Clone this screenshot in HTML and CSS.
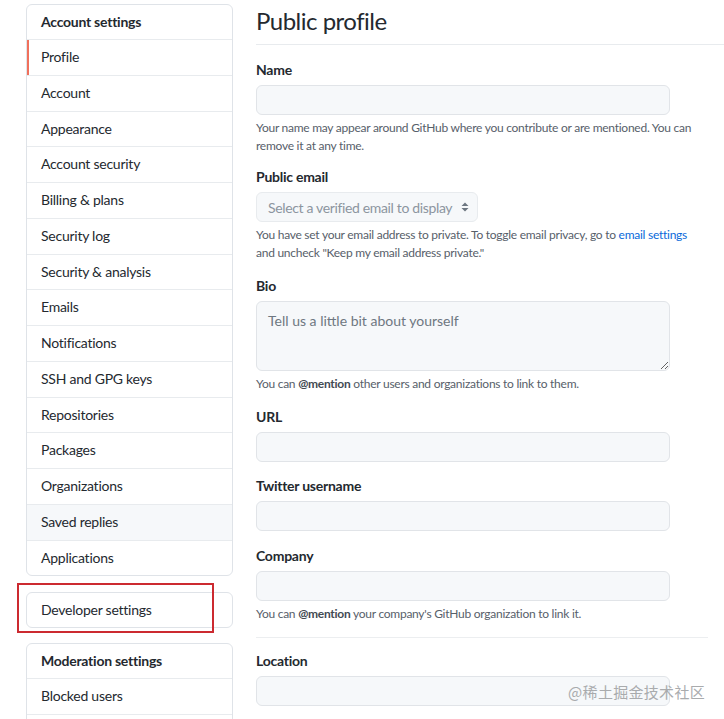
FILE: index.html
```html
<!DOCTYPE html>
<html lang="en">
<head>
<meta charset="utf-8">
<title>Public profile</title>
<link rel="stylesheet" href="styles.css">
</head>
<body>
<div class="page">
  <aside class="sidebar">
    <nav class="menu">
      <div class="menu-heading">Account settings</div>
      <a class="menu-item selected">Profile</a>
      <a class="menu-item">Account</a>
      <a class="menu-item">Appearance</a>
      <a class="menu-item">Account security</a>
      <a class="menu-item">Billing &amp; plans</a>
      <a class="menu-item">Security log</a>
      <a class="menu-item">Security &amp; analysis</a>
      <a class="menu-item">Emails</a>
      <a class="menu-item">Notifications</a>
      <a class="menu-item">SSH and GPG keys</a>
      <a class="menu-item">Repositories</a>
      <a class="menu-item">Packages</a>
      <a class="menu-item">Organizations</a>
      <a class="menu-item hover">Saved replies</a>
      <a class="menu-item">Applications</a>
    </nav>
    <nav class="menu menu-dev">
      <a class="menu-item first">Developer settings</a>
    </nav>
    <div class="highlight-box"></div>
    <nav class="menu menu-mod">
      <div class="menu-heading">Moderation settings</div>
      <a class="menu-item">Blocked users</a>
      <a class="menu-item"></a>
    </nav>
  </aside>
  <main class="main">
    <h1 class="title">Public profile</h1>
    <div class="field first-field">
      <label class="label">Name</label>
      <input class="input" type="text">
      <p class="note">Your name may appear around GitHub where you contribute or are mentioned. You can remove it at any time.</p>
    </div>
    <div class="field email-field">
      <label class="label">Public email</label>
      <div class="select">
        <span class="select-text">Select a verified email to display</span>
        <svg class="select-arrows" width="8" height="12" viewBox="0 0 8 12"><path d="M4 1.5 L7.5 5 H0.5 Z M4 10.5 L7.5 7 H0.5 Z" fill="#6e7781"/></svg>
      </div>
      <p class="note">You have set your email address to private. To toggle email privacy, go to <a class="link">email settings</a> and uncheck "Keep my email address private."</p>
    </div>
    <div class="field">
      <label class="label">Bio</label>
      <textarea class="textarea" placeholder="Tell us a little bit about yourself"></textarea>
      <p class="note">You can <strong>@mention</strong> other users and organizations to link to them.</p>
    </div>
    <div class="field">
      <label class="label">URL</label>
      <input class="input" type="text">
    </div>
    <div class="field">
      <label class="label">Twitter username</label>
      <input class="input" type="text">
    </div>
    <div class="field company-field">
      <label class="label">Company</label>
      <input class="input" type="text">
      <p class="note">You can <strong>@mention</strong> your company's GitHub organization to link it.</p>
    </div>
    <hr class="divider">
    <div class="field after-divider">
      <label class="label">Location</label>
      <input class="input" type="text">
    </div>
  </main>
</div>
<div class="watermark">@稀土掘金技术社区</div>
</body>
</html>
```
FILE: styles.css
```css
* { box-sizing: border-box; }
html, body {
  margin: 0;
  padding: 0;
  background: #ffffff;
  overflow: hidden;
}
body {
  font-family: Lato, "Open Sans", "Liberation Sans", sans-serif;
  color: #24292f;
  font-size: 14px;
  letter-spacing: -0.25px;
  height: 719px;
  position: relative;
}
.page {
  display: flex;
  gap: 23px;
  padding-left: 26px;
}
.sidebar {
  width: 207px;
  flex: none;
  position: relative;
  padding-top: 4px;
}
.menu {
  border: 1px solid #dfe3e8;
  border-radius: 6px;
  overflow: hidden;
  background: #fff;
}
.menu-heading {
  height: 34px;
  line-height: 34px;
  padding-left: 14px;
  font-weight: 700;
  font-size: 14px;
}
.menu-item {
  display: block;
  height: 35.75px;
  line-height: 34.75px;
  padding-left: 14px;
  border-top: 1px solid #e8ebee;
  color: #24292f;
  font-size: 14px;
  position: relative;
}
.menu-item.first { border-top: 0; height: 34px; line-height: 34px; }
.menu-item.selected::before {
  content: "";
  position: absolute;
  left: 0;
  top: 0;
  bottom: 0;
  width: 2px;
  background: #f0705c;
}
.menu-item.hover { background: #f6f8fa; }
.menu-dev { margin-top: 16px; }
.menu-mod { margin-top: 15px; }
.highlight-box {
  position: absolute;
  left: -9px;
  top: 583px;
  width: 197px;
  height: 50px;
  border: 2px solid #cc2a30;
}
.main {
  flex: 1;
  min-width: 0;
}
.title {
  margin: 6px 0 0 0;
  font-size: 24px;
  line-height: 30px;
  font-weight: 400;
  letter-spacing: -0.5px;
  padding-bottom: 8px;
  border-bottom: 1px solid #e8ebee;
}
.field { margin-top: 14px; }
.first-field { margin-top: 15px; }
.email-field { margin-top: 12px; }
.company-field { margin-top: 15px; }
.label {
  display: block;
  font-weight: 700;
  font-size: 14px;
  line-height: 20px;
  margin-bottom: 5px;
}
.input {
  display: block;
  width: 414px;
  height: 30px;
  margin: 0;
  border: 1px solid #e1e4e8;
  border-radius: 6px;
  background: #f6f8fa;
  font: inherit;
  outline: none;
}
.select {
  width: 222px;
  height: 30px;
  border: 1px solid #e8ebee;
  border-radius: 6px;
  background: #f6f8fa;
  display: flex;
  align-items: center;
  justify-content: space-between;
  padding: 0 8px 0 11px;
  color: #8c959f;
  font-size: 14px;
}
.select-text {
  white-space: nowrap;
  letter-spacing: -0.35px;
}
.select-arrows { display: block; flex: none; }
.textarea {
  display: block;
  width: 414px;
  height: 70px;
  margin: 0;
  border: 1px solid #e1e4e8;
  border-radius: 6px;
  background: #f6f8fa;
  padding: 9px 11px;
  font: inherit;
  font-size: 14px;
  line-height: 20px;
  resize: vertical;
  outline: none;
}
.textarea::placeholder { color: #6e7781; }
.note {
  margin: 4px 0 0 0;
  font-size: 12px;
  line-height: 18px;
  letter-spacing: -0.26px;
  color: #57606a;
  max-width: 440px;
}
.note strong { color: #424a53; }
.link { color: #0969da; }
.divider {
  border: 0;
  border-top: 1px solid #eceef0;
  margin: 14px 16px 0 0;
  height: 0;
}
.after-divider { margin-top: 13px; }
.watermark {
  position: absolute;
  right: 19px;
  top: 681px;
  font-family: "Noto Sans CJK SC", sans-serif;
  font-size: 15px;
  line-height: 22px;
  color: #a9abad;
  letter-spacing: 0.3px;
}
```
